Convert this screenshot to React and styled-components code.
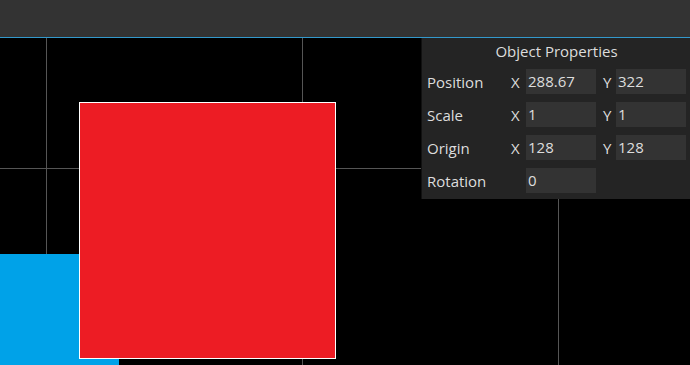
import React from 'react'
import styled, {createGlobalStyle} from 'styled-components'

const GlobalStyle = createGlobalStyle`
	html, body {
		margin: 0;
		padding: 0;
		background: #000;
		overflow: hidden;
	}
	body {
		font-family: 'Open Sans', 'Noto Sans', sans-serif;
	}
`

const Screen = styled.div`
	display: flex;
	flex-direction: column;
	width: 690px;
	height: 365px;
`

const TopBar = styled.div`
	height: 37px;
	flex: none;
	background: #333333;
	border-bottom: 1px solid #3399cc;
`

const Viewport = styled.div`
	position: relative;
	flex: 1;
	overflow: hidden;
	background-color: #000;
	background-image:
		linear-gradient(to right, #555 1px, transparent 1px),
		linear-gradient(to bottom, #555 1px, transparent 1px);
	background-size: 256px 256px;
	background-position: 46px 130px;
`

const Sprite = styled.div`
	position: absolute;
	box-sizing: border-box;
	width: ${p => (p.$selected ? 257 : 256)}px;
	height: ${p => (p.$selected ? 257 : 256)}px;
	background: ${p => p.$color};
	border: ${p => (p.$selected ? '1px solid #fff' : 'none')};
`

const Panel = styled.div`
	position: absolute;
	top: 0;
	right: 0;
	width: 259px;
	padding: 0 4px 6px 5px;
	background: #242424;
	border-left: 1px solid #111;
	color: #dddddd;
	font-size: 15px;
`

const Title = styled.div`
	height: 31px;
	line-height: 26px;
	text-align: center;
`

const Rows = styled.div`
	display: flex;
	flex-direction: column;
	gap: 8px;
`

const Row = styled.div`
	display: flex;
	align-items: center;
	height: 25px;
`

const Label = styled.span`
	width: 84px;
`

const Axis = styled.span`
	width: ${p => p.$w}px;
	margin-left: ${p => p.$gap || 0}px;
`

const Field = styled.div`
	width: 68px;
	height: 25px;
	padding-left: 2px;
	line-height: 25px;
	background: #333333;
`

const rows = [
	{label: 'Position', x: '288.67', y: '322'},
	{label: 'Scale', x: '1', y: '1'},
	{label: 'Origin', x: '128', y: '128'},
	{label: 'Rotation', value: '0'},
]

const App = () => (
	<Screen>
		<GlobalStyle />
		<TopBar />
		<Viewport>
			<Sprite $color="#00a2e8" style={{left: -137, top: 216}} />
			<Sprite $color="#ed1c24" $selected style={{left: 79, top: 64}} />
			<Panel>
				<Title>Object Properties</Title>
				<Rows>
					{rows.map(r => (
						<Row key={r.label}>
							<Label>{r.label}</Label>
							{r.value !== undefined ? (
								<>
									<Axis $w={15} />
									<Field>{r.value}</Field>
								</>
							) : (
								<>
									<Axis $w={15}>X</Axis>
									<Field>{r.x}</Field>
									<Axis $w={13} $gap={7}>Y</Axis>
									<Field>{r.y}</Field>
								</>
							)}
						</Row>
					))}
				</Rows>
			</Panel>
		</Viewport>
	</Screen>
)

export default App
